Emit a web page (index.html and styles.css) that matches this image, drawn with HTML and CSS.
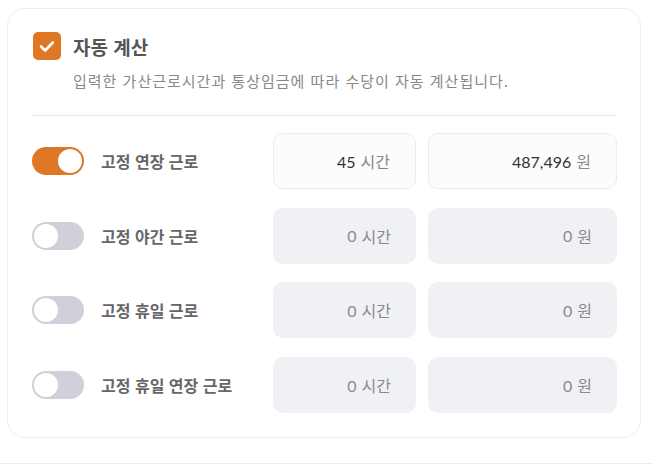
FILE: index.html
```html
<!DOCTYPE html>
<html lang="ko">
<head>
<meta charset="utf-8">
<link rel="stylesheet" href="styles.css">
</head>
<body>
<div class="card">
  <div class="head">
    <span class="check">
      <svg width="28" height="28" viewBox="0 0 28 28"><path d="M8 14.5l4.2 4 7.6-8" fill="none" stroke="#fff" stroke-width="2.6" stroke-linecap="round" stroke-linejoin="round"/></svg>
    </span>
    <span class="title">자동 계산</span>
  </div>
  <p class="desc">입력한 가산근로시간과 통상임금에 따라 수당이 자동 계산됩니다.</p>
  <div class="divider"></div>
  <div class="rows">
    <div class="row">
      <span class="toggle on"><span class="knob"></span></span>
      <span class="label">고정 연장 근로</span>
      <div class="box hours active"><span class="num">45</span><span class="unit">시간</span></div>
      <div class="box won active"><span class="num">487,496</span><span class="unit">원</span></div>
    </div>
    <div class="row">
      <span class="toggle"><span class="knob"></span></span>
      <span class="label">고정 야간 근로</span>
      <div class="box hours"><span class="num">0</span><span class="unit">시간</span></div>
      <div class="box won"><span class="num">0</span><span class="unit">원</span></div>
    </div>
    <div class="row">
      <span class="toggle"><span class="knob"></span></span>
      <span class="label">고정 휴일 근로</span>
      <div class="box hours"><span class="num">0</span><span class="unit">시간</span></div>
      <div class="box won"><span class="num">0</span><span class="unit">원</span></div>
    </div>
    <div class="row">
      <span class="toggle"><span class="knob"></span></span>
      <span class="label">고정 휴일 연장 근로</span>
      <div class="box hours"><span class="num">0</span><span class="unit">시간</span></div>
      <div class="box won"><span class="num">0</span><span class="unit">원</span></div>
    </div>
  </div>
</div>
<div class="bottom-line"></div>
</body>
</html>
```

FILE: styles.css
```css
html, body {
  margin: 0;
  padding: 0;
  background: #fff;
}
body {
  padding: 8px 0 0 7px;
  font-family: "Noto Sans CJK KR", "Noto Sans", sans-serif;
}
.card {
  box-sizing: border-box;
  width: 634px;
  height: 430px;
  border: 1px solid #ececee;
  border-radius: 18px;
  padding: 22px 23px 0 24px;
}
.head {
  display: flex;
  align-items: center;
  gap: 12px;
  height: 30px;
}
.check {
  width: 28px;
  height: 28px;
  border-radius: 5px;
  background: #de7825;
  display: flex;
  align-items: center;
  justify-content: center;
  margin-left: 1px;
}
.title {
  font-size: 19px;
  font-weight: 700;
  color: #555558;
  letter-spacing: 0;
}
.desc {
  margin: 7px 0 0 41px;
  font-size: 15px;
  color: #88888c;
  line-height: 26px;
  letter-spacing: 1px;
}
.divider {
  margin: 21px 0 0 1px;
  height: 1px;
  background: #e6e6e9;
}
.rows {
  margin-top: 17px;
  display: flex;
  flex-direction: column;
  gap: 18.7px;
}
.row {
  display: flex;
  align-items: center;
  height: 56px;
}
.toggle {
  width: 52px;
  height: 28px;
  border-radius: 14px;
  background: #cfd0d9;
  display: flex;
  align-items: center;
  padding: 0 2px;
  box-sizing: border-box;
}
.toggle .knob {
  width: 24px;
  height: 24px;
  border-radius: 50%;
  background: #fff;
}
.toggle.on {
  background: #de7825;
  justify-content: flex-end;
}
.label {
  margin-left: 17px;
  width: 172px;
  font-size: 16px;
  font-weight: 700;
  color: #66666a;
  letter-spacing: 0;
}
.box {
  box-sizing: border-box;
  height: 56px;
  border-radius: 10px;
  background: #f0f1f5;
  display: flex;
  align-items: center;
  justify-content: flex-end;
  gap: 5px;
  padding-right: 25px;
  font-size: 16px;
}
.box.hours { width: 143px; }
.box.won { width: 189px; margin-left: 12px; }
.box.active {
  background: #fcfcfc;
  border: 1px solid #ececee;
}
.num { color: #8a8a8e; font-family: "Lato", "Noto Sans CJK KR", sans-serif; }
.unit { color: #8a8a8e; }
.box.active .num { color: #333336; }
.box.active .unit { color: #88888c; }
.bottom-line {
  margin: 25px 0 0 -7px;
  height: 1px;
  background: #ececee;
  width: 652px;
}
```
